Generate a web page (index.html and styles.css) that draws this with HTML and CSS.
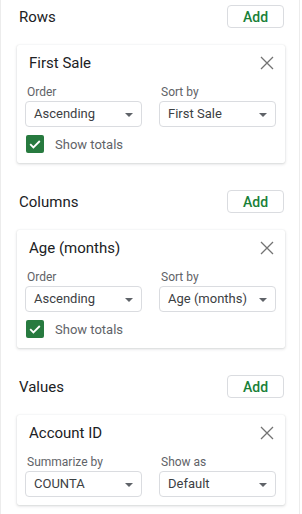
FILE: index.html
```html
<!DOCTYPE html>
<html lang="en">
<head>
    <meta charset="UTF-8">
    <meta name="viewport" content="width=device-width, initial-scale=1.0">
    <title>Pivot table editor</title>
    <link rel="stylesheet" href="styles.css">
</head>
<body>

    <div class="editor">

        <div class="section">
            <div class="section-head">
                <span class="section-title">Rows</span>
                <button class="add-btn">Add</button>
            </div>
            <div class="card">
                <div class="card-head">
                    <span class="card-title">First Sale</span>
                    <svg class="close" width="14" height="14" viewBox="0 0 14 14"><path d="M1 1L13 13M13 1L1 13" stroke="#737373" stroke-width="1.3" fill="none"/></svg>
                </div>
                <div class="fields">
                    <div class="field">
                        <label>Order</label>
                        <div class="select">Ascending<span class="arrow"></span></div>
                    </div>
                    <div class="field">
                        <label>Sort by</label>
                        <div class="select">First Sale<span class="arrow"></span></div>
                    </div>
                </div>
                <div class="check-row">
                    <span class="checkbox"><svg width="14" height="14" viewBox="0 0 14 14"><path d="M2.2 7.2L5.4 10.4L11.8 4" stroke="#fff" stroke-width="1.8" fill="none"/></svg></span>
                    <span class="check-label">Show totals</span>
                </div>
            </div>
        </div>

        <div class="section">
            <div class="section-head">
                <span class="section-title">Columns</span>
                <button class="add-btn">Add</button>
            </div>
            <div class="card">
                <div class="card-head">
                    <span class="card-title">Age (months)</span>
                    <svg class="close" width="14" height="14" viewBox="0 0 14 14"><path d="M1 1L13 13M13 1L1 13" stroke="#737373" stroke-width="1.3" fill="none"/></svg>
                </div>
                <div class="fields">
                    <div class="field">
                        <label>Order</label>
                        <div class="select">Ascending<span class="arrow"></span></div>
                    </div>
                    <div class="field">
                        <label>Sort by</label>
                        <div class="select">Age (months)<span class="arrow"></span></div>
                    </div>
                </div>
                <div class="check-row">
                    <span class="checkbox"><svg width="14" height="14" viewBox="0 0 14 14"><path d="M2.2 7.2L5.4 10.4L11.8 4" stroke="#fff" stroke-width="1.8" fill="none"/></svg></span>
                    <span class="check-label">Show totals</span>
                </div>
            </div>
        </div>

        <div class="section">
            <div class="section-head">
                <span class="section-title">Values</span>
                <button class="add-btn">Add</button>
            </div>
            <div class="card card-short">
                <div class="card-head">
                    <span class="card-title">Account ID</span>
                    <svg class="close" width="14" height="14" viewBox="0 0 14 14"><path d="M1 1L13 13M13 1L1 13" stroke="#737373" stroke-width="1.3" fill="none"/></svg>
                </div>
                <div class="fields">
                    <div class="field">
                        <label>Summarize by</label>
                        <div class="select">COUNTA<span class="arrow"></span></div>
                    </div>
                    <div class="field">
                        <label>Show as</label>
                        <div class="select">Default<span class="arrow"></span></div>
                    </div>
                </div>
            </div>
        </div>

    </div>

</body>
</html>
```

FILE: styles.css
```css
body {
    margin: 0;
    font-family: Roboto, 'Noto Sans', sans-serif;
    background-color: #fff;
    color: #202124;
}

.editor {
    width: 300px;
    min-height: 514px;
    box-sizing: border-box;
    border-left: 1px solid #ececec;
    border-right: 1px solid #ececec;
    padding: 5px 16px 0 16px;
}

.section {
    margin-bottom: 27px;
}

.section-head {
    display: flex;
    justify-content: space-between;
    align-items: center;
    height: 23px;
    margin-bottom: 17px;
}

.section-title {
    font-size: 15px;
    padding-left: 2px;
    color: #202124;
}

.add-btn {
    width: 57px;
    height: 23px;
    margin-right: -1px;
    background-color: #fff;
    border: 1px solid #dadce0;
    border-radius: 4px;
    color: #188038;
    font-family: Roboto, sans-serif;
    font-size: 14px;
    font-weight: 500;
    padding: 0;
    cursor: pointer;
}

.card {
    width: 268px;
    box-sizing: border-box;
    padding: 8px 9px 10px 8px;
    border-radius: 2px;
    box-shadow: 0 1px 3px rgba(60, 64, 67, 0.22), 0 0 1px rgba(60, 64, 67, 0.15);
    background-color: #fff;
}

.card-short {
    padding-bottom: 8px;
}

.card-head {
    display: flex;
    justify-content: space-between;
    align-items: center;
    height: 20px;
    margin-bottom: 11px;
}

.card-title {
    font-size: 15px;
    font-weight: 400;
    padding-left: 4px;
    color: #202124;
}

.close {
    margin-right: 2px;
}

.fields {
    display: grid;
    grid-template-columns: 117px 117px;
    column-gap: 17px;
}

.field label {
    display: block;
    font-size: 12px;
    line-height: 16px;
    color: #5f6368;
    padding-left: 2px;
    margin-bottom: 1px;
}

.select {
    position: relative;
    height: 26px;
    box-sizing: border-box;
    border: 1px solid #dadce0;
    border-radius: 4px;
    padding-left: 8px;
    font-size: 13px;
    line-height: 24px;
    color: #3c4043;
}

.arrow {
    position: absolute;
    right: 8px;
    top: 11px;
    border-left: 4px solid transparent;
    border-right: 4px solid transparent;
    border-top: 4px solid #5f6368;
}

.check-row {
    display: flex;
    align-items: center;
    margin-top: 8px;
    height: 18px;
}

.checkbox {
    display: flex;
    align-items: center;
    justify-content: center;
    width: 18px;
    height: 18px;
    margin-left: 1px;
    border-radius: 2px;
    background-color: #277a3f;
}

.check-label {
    font-size: 13px;
    color: #5f6368;
    margin-left: 11px;
}
```
